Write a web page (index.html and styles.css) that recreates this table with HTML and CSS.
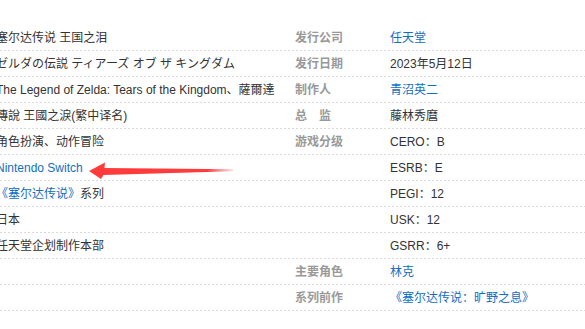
FILE: index.html
```html
<!DOCTYPE html>
<html lang="zh-CN">
<head>
<meta charset="utf-8">
<title>塞尔达传说 王国之泪</title>
<link rel="stylesheet" href="styles.css">
</head>
<body>
<div class="info">
  <dl class="col col-left">
    <div class="row"><dd>塞尔达传说 王国之泪</dd></div>
    <div class="row"><dd>ゼルダの伝説 ティアーズ オブ ザ キングダム</dd></div>
    <div class="row"><dd>The Legend of Zelda: Tears of the Kingdom、薩爾達</dd></div>
    <div class="row"><dd>傳說 王國之淚(繁中译名)</dd></div>
    <div class="row"><dd>角色扮演、动作冒险</dd></div>
    <div class="row"><dd><a class="link" href="#">Nintendo Switch</a></dd></div>
    <div class="row"><dd><a class="link" href="#">《塞尔达传说》</a>系列</dd></div>
    <div class="row"><dd>日本</dd></div>
    <div class="row"><dd>任天堂企划制作本部</dd></div>
    <div class="row"><dd></dd></div>
    <div class="row"><dd></dd></div>
  </dl>
  <dl class="col col-right">
    <div class="row"><dt>发行公司</dt><dd><a class="link" href="#">任天堂</a></dd></div>
    <div class="row"><dt>发行日期</dt><dd>2023年5月12日</dd></div>
    <div class="row"><dt>制作人</dt><dd><a class="link" href="#">青沼英二</a></dd></div>
    <div class="row"><dt>总　监</dt><dd>藤林秀麿</dd></div>
    <div class="row"><dt>游戏分级</dt><dd>CERO：B</dd></div>
    <div class="row"><dt></dt><dd>ESRB：E</dd></div>
    <div class="row"><dt></dt><dd>PEGI：12</dd></div>
    <div class="row"><dt></dt><dd>USK：12</dd></div>
    <div class="row"><dt></dt><dd>GSRR：6+</dd></div>
    <div class="row"><dt>主要角色</dt><dd><a class="link" href="#">林克</a></dd></div>
    <div class="row"><dt>系列前作</dt><dd><a class="link" href="#">《塞尔达传说：旷野之息》</a></dd></div>
  </dl>
</div>
<svg class="arrow" width="160" height="24" viewBox="0 0 160 24">
  <defs>
    <linearGradient id="fade" x1="0" y1="0" x2="1" y2="0">
      <stop offset="0" stop-color="#ff3b3b"/>
      <stop offset="0.82" stop-color="#ff3b3b"/>
      <stop offset="1" stop-color="#ff3b3b" stop-opacity="0.15"/>
    </linearGradient>
  </defs>
  <path d="M9 12 L25 3.5 L24.5 9 L153 10.3 L153 12.3 L23.5 16 L21 20 Z" fill="url(#fade)"/>
</svg>
</body>
</html>
```
FILE: styles.css
```css
html, body {
  margin: 0;
  padding: 0;
  background: #fff;
}
body {
  font-family: "Liberation Sans", "Noto Sans CJK SC", sans-serif;
  font-size: 12px;
  color: #333;
  overflow: hidden;
  position: relative;
  width: 585px;
  height: 329px;
}
.info {
  display: flex;
  padding-top: 25px;
  margin-left: -4px;
}
.col {
  margin: 0;
  padding: 0;
}
.col-left {
  width: 284px;
  flex: none;
}
.col-right {
  flex: 1;
  min-width: 0;
}
.row {
  display: flex;
  box-sizing: border-box;
  height: 26px;
  padding-top: 1px;
  line-height: 25px;
  background-image: repeating-linear-gradient(to right, #dadada 0 2px, transparent 2px 4px);
  background-size: 100% 1px;
  background-position: 0 100%;
  background-repeat: no-repeat;
  white-space: nowrap;
}
dt {
  width: 110px;
  padding-left: 15px;
  box-sizing: border-box;
  flex: none;
  color: #999;
  font-weight: bold;
}
dd {
  margin: 0;
}
.link {
  color: #136ec2;
  text-decoration: none;
}
.arrow {
  position: absolute;
  left: 80px;
  top: 159px;
}
```
